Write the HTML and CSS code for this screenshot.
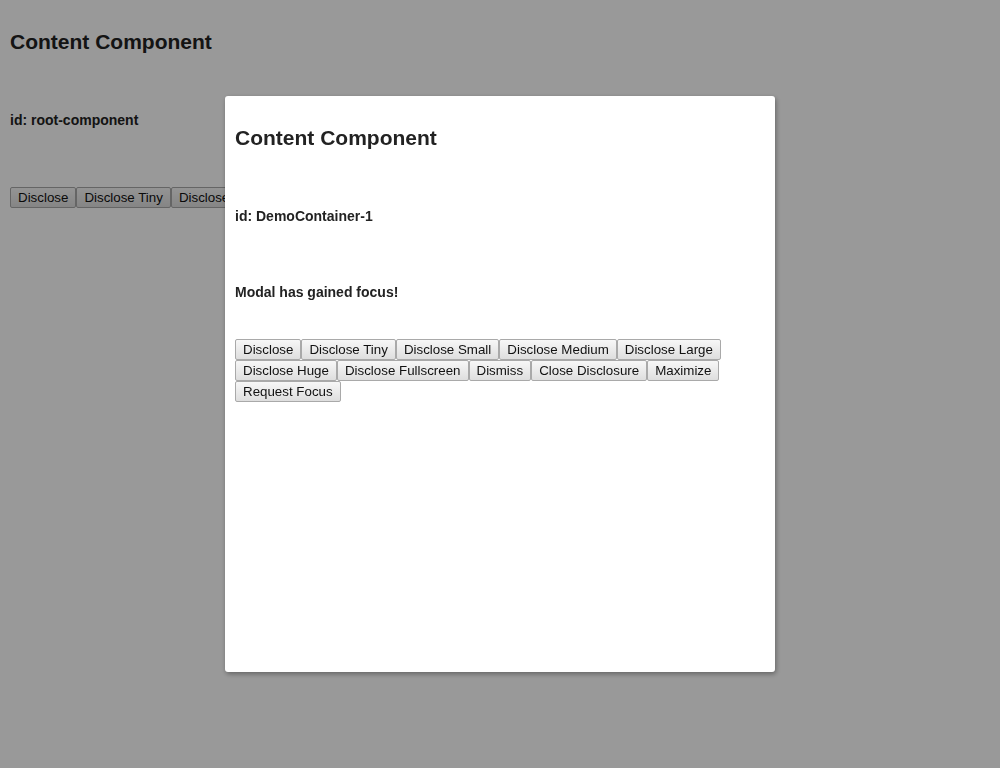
FILE: index.html
```html
<!DOCTYPE html>
<html lang="en">
<head>
  <meta charset="UTF-8" />
  <title>Content Component</title>
  <link rel="stylesheet" href="styles.css">
</head>
<body>

  <div class="component">
    <h2 class="title">Content Component</h2>
    <p class="id-line">id: root-component</p>
    <div class="actions root-actions">
      <button>Disclose</button><button>Disclose Tiny</button><button>Disclose Small</button><button>Disclose Medium</button><button>Disclose Large</button><button>Disclose Huge</button><button>Disclose Fullscreen</button>
    </div>
  </div>

  <!-- Modal -->
  <div class="overlay">
    <div class="modal">
      <div class="component">
        <h2 class="title">Content Component</h2>
        <p class="id-line">id: DemoContainer-1</p>
        <p class="focus-line">Modal has gained focus!</p>
        <div class="actions">
          <button>Disclose</button><button>Disclose Tiny</button><button>Disclose Small</button><button>Disclose Medium</button><button>Disclose Large</button><button>Disclose Huge</button><button>Disclose Fullscreen</button><button>Dismiss</button><button>Close Disclosure</button><button>Maximize</button><button>Request Focus</button>
        </div>
      </div>
    </div>
  </div>

</body>
</html>
```

FILE: styles.css
```css
body {
  margin: 0;
  font-family: "Liberation Sans", Arial, sans-serif;
  color: #222;
  background: #fff;
}

.component {
  padding: 10px;
}

.title {
  margin: 20px 0 0;
  font-size: 21px;
  line-height: 24px;
  font-weight: bold;
}

.id-line {
  margin: 58px 0 0;
  font-size: 14px;
  line-height: 16px;
  font-weight: bold;
}

.focus-line {
  margin: 60px 0 0;
  font-size: 14px;
  line-height: 16px;
  font-weight: bold;
}

.actions {
  margin-top: 39px;
  display: flex;
  flex-wrap: wrap;
}

.root-actions {
  margin-top: 59px;
}

.actions button {
  font-family: "Liberation Sans", Arial, sans-serif;
  font-size: 13.33px;
  line-height: 15px;
  color: #111;
  padding: 2px 7px;
  margin: 0;
  border: 1px solid #a9a9a9;
  border-radius: 2px;
  background: linear-gradient(#f7f7f7, #dedede);
}

/* Modal Popup */
.overlay {
  position: fixed;
  inset: 0;
  background: rgba(0, 0, 0, 0.4);
  display: flex;
  justify-content: center;
  align-items: center;
}

.modal {
  width: 550px;
  height: 576px;
  background: white;
  border-radius: 3px;
  box-shadow: 1px 2px 5px rgba(0, 0, 0, 0.35);
}
```
